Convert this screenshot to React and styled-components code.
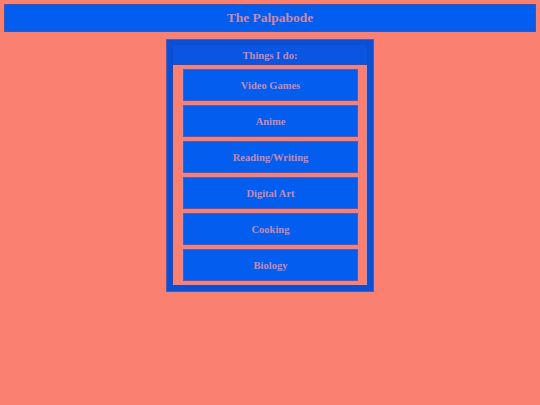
import React from 'react';
import styled, { createGlobalStyle } from 'styled-components';

const Global = createGlobalStyle`
  html, body {
    margin: 0;
    padding: 0;
    background: #fa8072;
  }
  body {
    font-family: "Liberation Serif", "Times New Roman", serif;
  }
`;

const Page = styled.div`
  padding: 4px;
  display: flex;
  flex-direction: column;
  align-items: center;
  gap: 7px;
`;

const Header = styled.header`
  align-self: stretch;
  height: 28px;
  box-sizing: border-box;
  background: #035ef0;
  border: 1px solid #3d55b4;
  display: flex;
  align-items: center;
  justify-content: center;
`;

const Title = styled.h1`
  margin: 0;
  font-size: 13.5px;
  font-weight: bold;
  color: #cc88aa;
`;

const Box = styled.section`
  width: 208px;
  box-sizing: border-box;
  background: #0b4fd2;
  border: 1px solid #4b5cc0;
  padding: 5px 6px 6px;
  display: flex;
  flex-direction: column;
`;

const BoxTitle = styled.h2`
  margin: 0;
  height: 20px;
  display: flex;
  align-items: center;
  justify-content: center;
  background: #0a55e2;
  font-size: 10.5px;
  font-weight: bold;
  color: #cc88aa;
`;

const List = styled.ul`
  list-style: none;
  margin: 0;
  background: #fa8072;
  padding: 4px 9px 4px 10px;
  display: flex;
  flex-direction: column;
  gap: 4px;
`;

const Item = styled.li`
  height: 32px;
  box-sizing: border-box;
  background: #035ef0;
  border: 1px solid #4a5cc0;
  display: flex;
  align-items: center;
  justify-content: center;
  font-size: 10.5px;
  font-weight: bold;
  color: #cc88aa;
`;

const things = ['Video Games', 'Anime', 'Reading/Writing', 'Digital Art', 'Cooking', 'Biology'];

export default function App() {
  return (
    <>
      <Global />
      <Page>
        <Header>
          <Title>The Palpabode</Title>
        </Header>
        <Box>
          <BoxTitle>Things I do:</BoxTitle>
          <List>
            {things.map((t) => (
              <Item key={t}>{t}</Item>
            ))}
          </List>
        </Box>
      </Page>
    </>
  );
}
